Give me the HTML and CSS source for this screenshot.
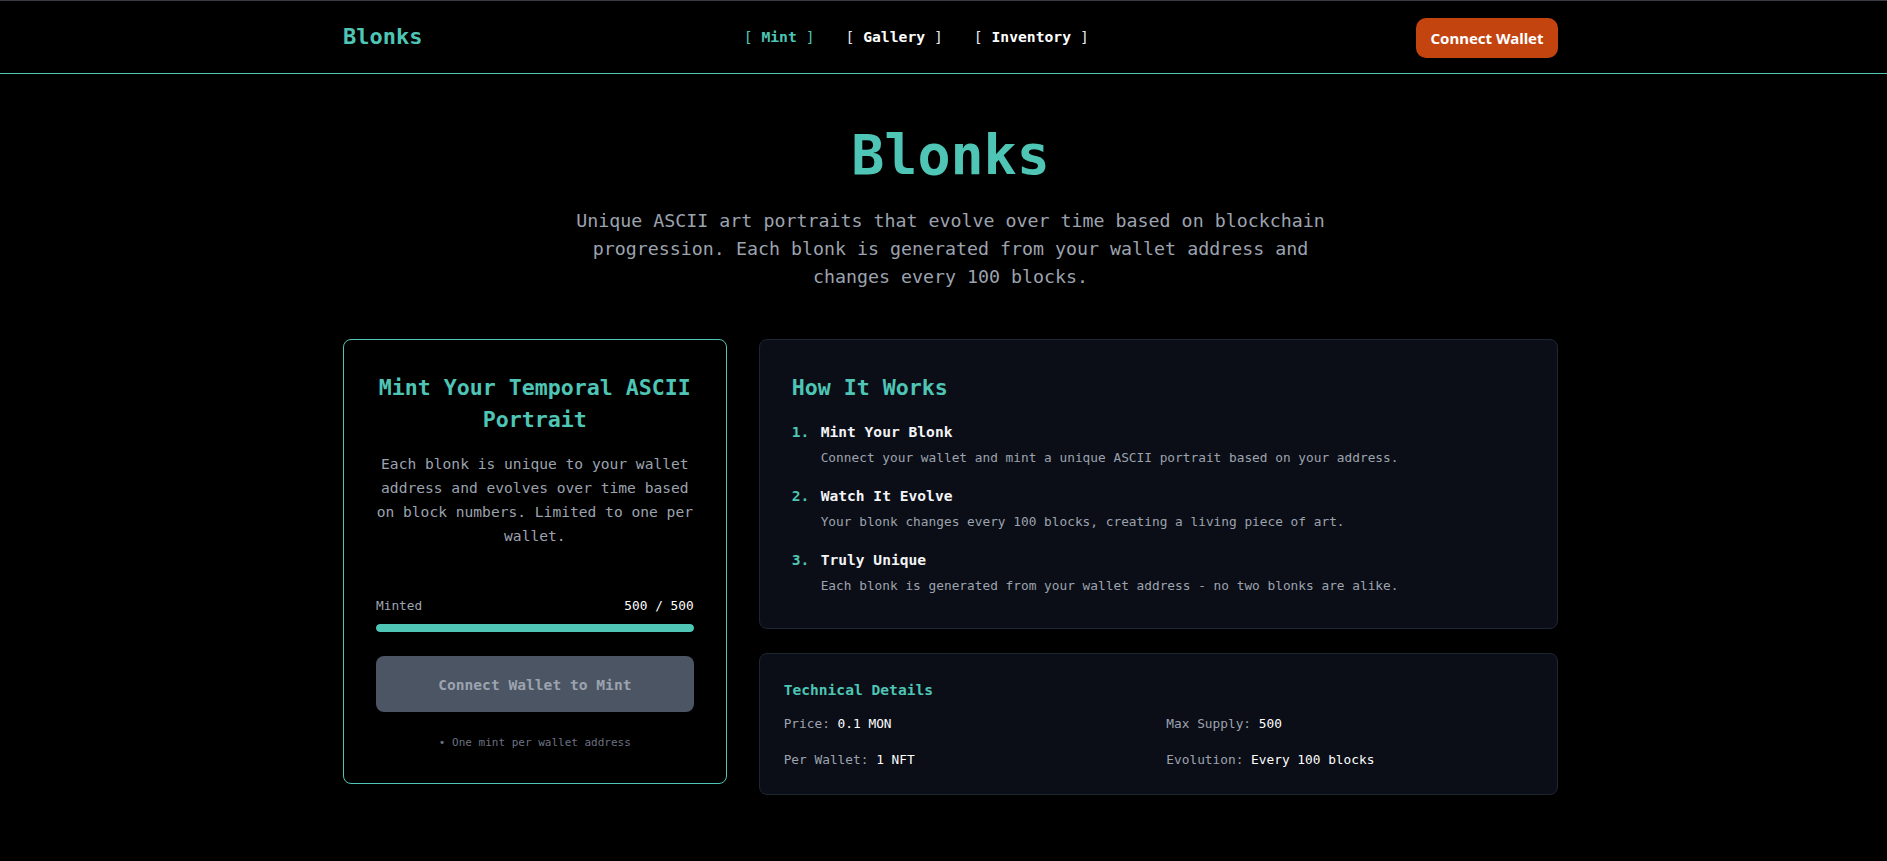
FILE: index.html
```html
<!DOCTYPE html>
<html lang="en">
<head>
<meta charset="utf-8">
<title>Blonks</title>
<link rel="stylesheet" href="styles.css">
</head>
<body>
<div class="page">
  <header class="header">
    <div class="container header-inner">
      <div class="logo">Blonks</div>
      <nav class="nav">
        <a class="nav-link active"><span class="br">[</span> Mint <span class="br">]</span></a>
        <a class="nav-link"><span class="br">[</span> Gallery <span class="br">]</span></a>
        <a class="nav-link"><span class="br">[</span> Inventory <span class="br">]</span></a>
      </nav>
      <button class="connect-btn">Connect Wallet</button>
    </div>
  </header>

  <main class="container main">
    <section class="hero">
      <h1 class="hero-title">Blonks</h1>
      <p class="hero-sub">Unique ASCII art portraits that evolve over time based on blockchain progression. Each blonk is generated from your wallet address and changes every 100 blocks.</p>
    </section>

    <div class="grid">
      <div class="mint-card">
        <h2 class="card-title">Mint Your Temporal ASCII Portrait</h2>
        <p class="mint-desc">Each blonk is unique to your wallet address and evolves over time based on block numbers. Limited to one per wallet.</p>
        <div class="progress-row">
          <span class="muted">Minted</span>
          <span class="white">500 / 500</span>
        </div>
        <div class="progress-track"><div class="progress-fill" style="width:100%"></div></div>
        <button class="mint-btn">Connect Wallet to Mint</button>
        <p class="footnote">• One mint per wallet address</p>
      </div>

      <div class="right-col">
        <div class="panel how">
          <h2 class="card-title left">How It Works</h2>
          <ol class="steps">
            <li class="step">
              <div class="step-head"><span class="num">1.</span>Mint Your Blonk</div>
              <p class="step-desc">Connect your wallet and mint a unique ASCII portrait based on your address.</p>
            </li>
            <li class="step">
              <div class="step-head"><span class="num">2.</span>Watch It Evolve</div>
              <p class="step-desc">Your blonk changes every 100 blocks, creating a living piece of art.</p>
            </li>
            <li class="step">
              <div class="step-head"><span class="num">3.</span>Truly Unique</div>
              <p class="step-desc">Each blonk is generated from your wallet address - no two blonks are alike.</p>
            </li>
          </ol>
        </div>

        <div class="panel tech">
          <h3 class="tech-title">Technical Details</h3>
          <div class="tech-grid">
            <div><span class="muted">Price:</span> <span class="white">0.1 MON</span></div>
            <div><span class="muted">Max Supply:</span> <span class="white">500</span></div>
            <div><span class="muted">Per Wallet:</span> <span class="white">1 NFT</span></div>
            <div><span class="muted">Evolution:</span> <span class="white">Every 100 blocks</span></div>
          </div>
        </div>
      </div>
    </div>
  </main>
</div>
</body>
</html>
```

FILE: styles.css
```css
* { box-sizing: border-box; }

html, body {
  margin: 0;
  padding: 0;
  background: #000;
}

body {
  font-family: "DejaVu Sans Mono", "Liberation Mono", monospace;
  color: #9ca3af;
  border-top: 1px solid #3a3d44;
  min-height: 861px;
}

.page {
  padding-left: 14px;
}

.container {
  width: 1215px;
  margin: 0 auto;
}

/* header */
.header {
  border-bottom: 1px solid #4ec5b5;
  margin-left: -14px;
  padding-left: 14px;
}

.header-inner {
  height: 72px;
  display: flex;
  align-items: center;
  justify-content: space-between;
}

.logo {
  color: #4ec5b5;
  font-weight: bold;
  font-size: 22px;
  line-height: 32px;
}

.nav {
  display: flex;
  gap: 31px;
  margin-right: 6px;
}

.nav-link {
  font-size: 14.7px;
  font-weight: bold;
  color: #ffffff;
  text-decoration: none;
  line-height: 20px;
}

.nav-link .br {
  font-weight: normal;
  color: #e5e7eb;
}

.nav-link.active,
.nav-link.active .br {
  color: #4ec5b5;
}

.connect-btn {
  font-family: "Noto Sans", "Open Sans", sans-serif;
  font-weight: 700;
  font-size: 15px;
  color: #fff;
  background: #c4440f;
  border: none;
  border-radius: 10px;
  height: 40px;
  width: 142px;
  padding: 0;
  margin-top: 2px;
}

/* hero */
.main {
  padding-top: 51px;
}

.hero {
  text-align: center;
}

.hero-title {
  margin: 0;
  color: #4ec5b5;
  font-size: 55px;
  font-weight: bold;
  line-height: 60px;
}

.hero-sub {
  width: 768px;
  margin: 22px auto 0;
  font-size: 18.3px;
  line-height: 28px;
  color: #9ca3af;
}

/* grid */
.grid {
  margin-top: 48px;
  display: grid;
  grid-template-columns: repeat(3, 1fr);
  gap: 32px;
  align-items: start;
}

.mint-card {
  border: 1px solid #4ec5b5;
  border-radius: 8px;
  padding: 32px;
  text-align: center;
  background: #000;
}

.card-title {
  margin: 0;
  color: #4ec5b5;
  font-size: 21.6px;
  font-weight: bold;
  line-height: 32px;
}

.card-title.left {
  text-align: left;
}

.mint-desc {
  margin: 16px 0 0;
  font-size: 14.6px;
  line-height: 24px;
  color: #9ca3af;
}

.progress-row {
  margin-top: 48px;
  display: flex;
  justify-content: space-between;
  font-size: 12.8px;
  line-height: 20px;
}

.muted { color: #9ca3af; }
.white { color: #ffffff; }

.progress-track {
  margin-top: 8px;
  height: 8px;
  border-radius: 999px;
  background: #1f2937;
  overflow: hidden;
}

.progress-fill {
  height: 100%;
  background: #4ec5b5;
  border-radius: 999px;
}

.mint-btn {
  margin-top: 24px;
  width: 100%;
  height: 56px;
  border: none;
  border-radius: 8px;
  background: #4b5563;
  color: #9ca3af;
  font-family: "DejaVu Sans Mono", "Liberation Mono", monospace;
  font-weight: bold;
  font-size: 14.6px;
}

.footnote {
  margin: 23px 0 0;
  font-size: 11px;
  line-height: 16px;
  color: #6b7280;
}

/* right column */
.right-col {
  grid-column: span 2;
  display: flex;
  flex-direction: column;
  gap: 24px;
}

.panel {
  background: #0b0e16;
  border: 1px solid #1f2633;
  border-radius: 8px;
}

.how {
  padding: 32px;
}

.steps {
  list-style: none;
  margin: 16px 0 0;
  padding: 0;
  display: flex;
  flex-direction: column;
  gap: 16px;
}

.step-head {
  font-size: 14.6px;
  line-height: 24px;
  font-weight: bold;
  color: #f3f4f6;
}

.num {
  color: #4ec5b5;
  display: inline-block;
  width: 29px;
}

.step-desc {
  margin: 4px 0 0 29px;
  font-size: 12.8px;
  line-height: 20px;
  color: #9ca3af;
}

.tech {
  padding: 24px;
}

.tech-title {
  margin: 0;
  color: #4ec5b5;
  font-size: 14.6px;
  line-height: 24px;
  font-weight: bold;
}

.tech-grid {
  margin-top: 12px;
  display: grid;
  grid-template-columns: 1fr 1fr;
  gap: 16px;
  font-size: 12.8px;
  line-height: 20px;
}
```
